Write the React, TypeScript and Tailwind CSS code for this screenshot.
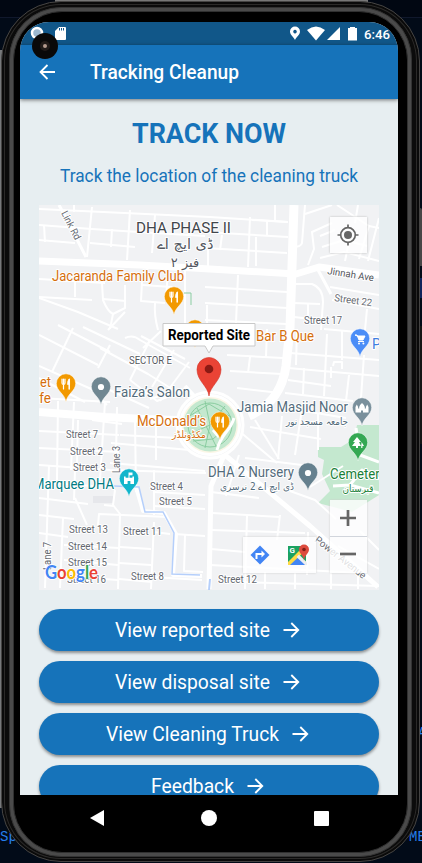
import React from "react";

const minorRoads = [
  "M39 209 L210 217 L288 222", "M39 225 L92 229 L138 232 L205 236", "M39 240 L75 243", "M44 225 L45 242",
  "M92 207 L87 257", "M90 243 L135 247", "M130 210 L127 260", "M112 229 L111 247", "M155 215 L152 253", "M74 205 L74 212",
  "M75 282 V297", "M39 279 L105 283", "M39 297 L92 300", "M39 298 L78 312 L118 329", "M102 283 L103 300 Q108 312 113 314 L125 308 V285",
  "M103 299 L126 301", "M113 314 L110 329", "M125 312 L108 330", "M142 282 L141 301 L165 303", "M142 285 L172 287", "M155 303 Q154 315 158 330", "M168 268 L166 300", "M185 270 V330",
  "M252 220 L288 222", "M205 232 L288 237", "M205 248 L287 253", "M205 287 L287 292", "M205 303 L287 308", "M250 217 L248 267", "M267 220 V235",
  "M275 205 V220", "M222 235 L220 250", "M208 248 V268", "M238 275 L236 323", "M256 237 V266", "M205 320 L287 324", "M207 305 V323",
  "M305 205 L302 243 Q301 247 293 247", "M305 214 L332 205", "M332 223 L312 232 L314 249 L308 265", "M337 205 L369 226 L379 228", "M320 236 L335 230", "M322 247 L344 240 L367 246", "M320 258 L344 252 L379 261",
  "M358 205 L355 223", "M369 226 L359 259", "M379 218 L368 261", "M351 232 L345 261", "M330 287 L379 295", "M332 300 L379 309", "M295 284 L312 284 Q323 288 323 302 L321 330", "M293 303 L320 304", "M308 303 V317", "M294 317 L320 320", "M324 329 L379 334", "M367 309 L365 330",
  "M39 335 L98 365", "M73 328 L52 372", "M83 327 L140 354", "M58 325 L110 352", "M39 366 L98 392", "M39 378 L85 402", "M92 382 L149 408", "M100 348 L148 374 L172 389", "M110 345 L98 368", "M125 338 Q133 334 140 340 L190 368", "M141 336 L185 359", "M161 331 L143 348", "M150 340 L130 380", "M174 350 L152 387", "M189 362 L160 401", "M150 399 L182 389", "M92 390 L107 405", "M130 380 L157 401 L185 390",
  "M39 398 L110 402", "M58 401 L57 480", "M74 402 L71 470", "M105 402 L100 480", "M117 407 L116 455", "M39 431 L119 435", "M39 448 L119 452", "M92 420 L122 424", "M78 420 L77 465", "M156 423 V460", "M135 421 L136 492", "M111 443 L190 450", "M110 463 L205 471", "M120 435 L178 438",
  "M227 355 L283 358", "M230 371 L282 374", "M237 388 L280 393", "M250 357 L248 373", "M267 329 L266 357", "M290 353 L379 360", "M288 368 L379 376", "M288 380 L331 386", "M285 393 L353 401", "M327 334 L324 396", "M364 355 L361 398", "M304 368 L303 394", "M331 367 V378 M333 366 L334 362 H342 V369", "M297 329 L296 365", "M342 331 V360", "M349 375 L346 401",
  "M250 427 L321 439", "M255 420 L279 459", "M239 431 L277 463", "M282 416 L278 459", "M302 409 L295 455", "M318 414 V450", "M286 408 L346 418", "M245 458 L310 466",
  "M39 465 L110 470 L206 473", "M39 482 L93 486", "M39 498 L88 504", "M49 465 L45 588", "M75 498 L87 525", "M75 470 L74 500", "M63 518 L60 588", "M39 515 L74 519", "M98 525 L99 514 L168 517", "M39 533 L68 537", "M64 545 L119 548", "M64 560 L118 565", "M64 576 L118 580", "M115 490 L113 505 L120 514 L118 589", "M104 505 L114 506", "M154 522 L151 589", "M120 547 L151 549", "M119 563 L151 565", "M119 579 L152 582", "M152 577 L202 580", "M154 532 L170 534", "M185 535 L184 571 L203 572", "M174 534 L205 536", "M154 492 L205 495", "M154 506 L205 509", "M154 470 L154 515",
  "M212 513 L280 517", "M211 530 L305 533", "M211 549 L245 552", "M247 515 L245 589", "M280 515 L277 540", "M308 532 L307 575", "M210 565 L360 573", "M238 582 L379 586", "M265 572 V589", "M295 573 V589", "M331 573 V589", "M211 492 L259 498", "M239 455 L226 496", "M262 486 L324 537", "M290 491 L315 500 L336 519", "M310 487 L343 466", "M360 531 L379 550", "M338 546 L379 569", "M358 573 V589",
];

const arteries = [
  ["M39 261 L140 265 L210 269 L296 274 L319 267 L379 275", 7],
  ["M294 205 L290 328 L286 366 Q281 402 249 416", 9],
  ["M39 412 L105 417 L145 419 L178 420", 8],
  ["M59 205 L66 218 L86 257", 3],
  ["M317 268 L331 294", 3],
  ["M224 455 L211 486 L209 589", 5],
  ["M225 455 L262 486 L310 526 L378 587", 5],
  ["M136 487 L143 511 L164 513 L176 534 L173 575 L202 576", 4],
  ["M185 386 L196 398", 4],
] as const;

type LabelProps = { x: number; y: number; w?: number; s?: number; c?: string; rot?: number; rtl?: boolean; children: string };
function Label({ x, y, w, s = 10, c = "#646870", rot, rtl, children }: LabelProps) {
  return (
    <text
      x={x} y={y} fontSize={s} fill={c} stroke="#ffffff" strokeWidth="2" strokeLinejoin="round" paintOrder="stroke"
      textLength={w} lengthAdjust="spacingAndGlyphs" textAnchor={rtl ? "middle" : "start"}
      className={rtl ? "font-['DejaVu_Sans',sans-serif]" : "font-['Roboto',sans-serif]"}
      transform={rot ? `rotate(${rot} ${x} ${y})` : undefined}
    >
      {children}
    </text>
  );
}

function Pin({ x, y, color, children }: { x: number; y: number; color: string; children?: React.ReactNode }) {
  return (
    <g transform={`translate(${x} ${y})`}>
      <path d="M0 18 C-1 10 -9.7 7 -9.7 -.5 A9.7 9.7 0 0 1 9.7 -.5 C9.7 7 1 10 0 18Z" fill={color} stroke="#fff" strokeWidth=".5" />
      {children}
    </g>
  );
}

const fork = (
  <g fill="none" stroke="#fff" strokeLinecap="round">
    <path d="M-4 -5 V-1 Q-4 .5 -2.5 .5 Q-1 .5 -1 -1 V-5 M-2.5 -5 V5" strokeWidth="1.2" />
    <path d="M3.2 -4.4 V5" strokeWidth="1.5" />
    <path d="M3.2 -5 Q.9 -3 1.4 .5 H3.2Z" fill="#fff" strokeWidth=".6" />
  </g>
);

function CityMap() {
  return (
    <svg viewBox="39 205 340 385" className="block h-[385px] w-[340px]">
      <rect x="39" y="205" width="340" height="385" fill="#f1f2f4" />
      <path d="M357 425 H379 V495 L352 512 L318 503 L330 491 L322 474 L324 460 L318 457 V447 H341 L354 439Z" fill="#c4e8cf" />
      <path d="M93 496 h20 v7 h-20z" fill="#e6e7eb" />
      <g fill="none" stroke="#fff" strokeWidth="2" strokeLinejoin="round">
        {minorRoads.map((d) => <path key={d} d={d} />)}
        {arteries.map(([d, w]) => <path key={d} d={d} strokeWidth={w} />)}
        <path d="M356 428 L360 455 L379 462 M350 485 L362 470 L379 479 M333 486 L350 485 L379 493" strokeWidth="3" />
      </g>
      <path d="M114 486 L139 487 L145 512 H163 L174 533 L172 574 L200 575" fill="none" stroke="#b5cffb" strokeWidth="1.5" />
      <path d="M184 293 h7 v12" fill="none" stroke="#8bcda2" />
      <path d="M209 590 l1 -11" stroke="#b5cffb" strokeWidth="2" />
      <circle cx="210" cy="425" r="33" fill="#f1f2f4" stroke="#fff" strokeWidth="3" />
      <circle cx="210" cy="425" r="29.5" fill="#fbf6e6" stroke="#fff" strokeWidth="3" />
      <circle cx="210" cy="425" r="26.5" fill="#c4e8cf" />
      <g fill="none" stroke="#83ca9b" strokeWidth=".9">
        <circle cx="210" cy="425" r="22" />
        <path d="M188 417 L209 404 L231 417 M197 408 L217 448 M190 434 L210 425 L225 406 M205 401 L210 425 L205 448 M234 421 L213 439 L193 441" />
      </g>
      <path d="M234 418 C230 432 221 433 217 450 M219 437 L213 430" fill="none" stroke="#fff" strokeWidth="3" />

      <Label x={61} y={213} w={31} rot={63}>Link Rd</Label>
      <Label x={136} y={233} w={95} s={15} c="#42464c">DHA PHASE II</Label>
      <Label x={185} y={249} w={57} s={14} c="#53575e" rtl>ڈی ایچ اے</Label>
      <Label x={185} y={267} s={13} c="#53575e" rtl>فیز ۲</Label>
      <Label x={327} y={274} w={47} rot={9} c="#55585e">Jinnah Ave</Label>
      <Label x={334} y={301} w={38} rot={8}>Street 22</Label>
      <Label x={304} y={324} w={38}>Street 17</Label>
      <Label x={52} y={281} w={132} s={14} c="#d56e0c">Jacaranda Family Club</Label>
      <Label x={129} y={364} w={43} s={10} c="#55585e">SECTOR E</Label>
      <Label x={114} y={397} w={76} s={14} c="#536b7b">Faiza’s Salon</Label>
      <Label x={40} y={387} w={11} s={14} c="#d56e0c">et</Label>
      <Label x={32} y={403} w={19} s={14} c="#d56e0c">afe</Label>
      <Label x={256} y={341} w={58} s={14} c="#d56e0c">Bar B Que</Label>
      <Label x={372} y={349} s={14} c="#3e7de0">P</Label>
      <Label x={237} y={412} w={111} s={14} c="#536b7b">Jamia Masjid Noor</Label>
      <Label x={317} y={425} w={62} s={10} c="#536b7b" rtl>جامعہ مسجد نور</Label>
      <Label x={137} y={426} w={69} s={14} c="#d56e0c">McDonald’s</Label>
      <Label x={189} y={438} w={34} s={10} c="#d56e0c" rtl>مکڈونلڈز</Label>
      <Label x={66} y={438} w={32}>Street 7</Label>
      <Label x={70} y={455} w={33}>Street 2</Label>
      <Label x={73} y={471} w={33}>Street 3</Label>
      <Label x={120} y={473} w={27} rot={-90}>Lane 3</Label>
      <Label x={208} y={477} w={86} s={14} c="#536b7b">DHA 2 Nursery</Label>
      <Label x={257} y={490} w={74} s={10} c="#536b7b" rtl>ڈی ایچ اے 2 نرسری</Label>
      <Label x={330} y={479} w={56} s={14} c="#188038">Cemetery</Label>
      <Label x={358} y={492} w={31} s={10} c="#188038" rtl>قبرستان</Label>
      <Label x={33} y={489} w={81} s={14} c="#007b83">Marquee DHA</Label>
      <Label x={150} y={490} w={33}>Street 4</Label>
      <Label x={159} y={505} w={33}>Street 5</Label>
      <Label x={69} y={533} w={39}>Street 13</Label>
      <Label x={123} y={535} w={39}>Street 11</Label>
      <Label x={68} y={550} w={39}>Street 14</Label>
      <Label x={68} y={566} w={39}>Street 15</Label>
      <Label x={67} y={583} w={39}>Street 16</Label>
      <Label x={131} y={580} w={33}>Street 8</Label>
      <Label x={218} y={583} w={39}>Street 12</Label>
      <Label x={51} y={570} w={28} rot={-90}>Lane 7</Label>
      <Label x={314} y={541} w={62} rot={38}>Power Avenue</Label>

      <Pin x={174} y={297} color="#f29900">{fork}</Pin>
      <Pin x={195} y={330} color="#f29900">{fork}</Pin>
      <Pin x={66} y={384} color="#f29900">{fork}</Pin>
      <Pin x={101} y={387} color="#708792"><circle r="3.1" fill="#fff" /></Pin>
      <Pin x={360} y={339} color="#4b8df7"><path d="M-5 -4 H-3 L-1 1 H3 L5 -3 H-2.7Z M-2 2.5 H4" fill="#fff" stroke="#fff" /><circle cx="-1" cy="4.5" r="1" fill="#fff" /><circle cx="3.4" cy="4.5" r="1" fill="#fff" /></Pin>
      <Pin x={362} y={408} color="#7a909c"><path d="M-6.5 4.5 V-1 l1.3 -2.4 1.3 2.4 V.5 H-2.8 V-1 Q-2.8 -2.6 0 -5 Q2.8 -2.6 2.8 -1 V.5 H3.9 V-1 l1.3 -2.4 1.3 2.4 V4.5 H1 V2.4 H-1 V4.5Z" fill="#fff" /></Pin>
      <Pin x={358} y={443} color="#34a853"><path d="M-1 -6 L-5 -1 H-3 L-6 3 H-2 V5 H0 V3 H3 L1 -1 H3Z M3.6 -1 L6 3 H4.4 V5 H3.2 V3Z" fill="#fff" /></Pin>
      <Pin x={308} y={473} color="#65808e"><circle r="3.1" fill="#fff" /></Pin>
      <Pin x={129} y={479} color="#12b5cb"><path d="M-5 5 V-2.5 H-3.4 V-1.2 H-.5 V-6.5 H3.5 V-3.8 H.5 V-1.2 H3.4 V-2.5 H5 V5 H1.4 V2 H-1.4 V5Z" fill="#fff" /></Pin>
      <Pin x={220} y={422} color="#f29900">{fork}</Pin>

      <path d="M209 396 C208 386 197 381 197 369.5 A12 12 0 0 1 221 369.5 C221 381 210 386 209 396Z" fill="#ea4335" stroke="#d33426" strokeWidth=".6" />
      <circle cx="209" cy="369" r="4.3" fill="#8b1a14" />
      <path d="M163 323.5 H255 V346 H213 L209 353 L205 346 H163Z" fill="#fff" stroke="#c9c9c9" />
      <text x="168" y="340" textLength="82" lengthAdjust="spacingAndGlyphs" className="fill-black font-['Roboto',sans-serif] text-[14px] font-bold">Reported Site</text>
      <text x="45" y="579" textLength="53" lengthAdjust="spacingAndGlyphs" stroke="#fff" strokeWidth="1.6" paintOrder="stroke" className="font-['Lato',sans-serif] text-[19px] font-bold">
        <tspan fill="#4285f4">G</tspan><tspan fill="#ea4335">o</tspan><tspan fill="#fbbc04">o</tspan><tspan fill="#4285f4">g</tspan><tspan fill="#34a853">l</tspan><tspan fill="#ea4335">e</tspan>
      </text>
    </svg>
  );
}

function MapControls() {
  return (
    <>
      <button className="absolute top-[12px] left-[291px] flex h-[36px] w-[37px] items-center justify-center bg-white/80 pr-px shadow-[0_0_2px_#bbb]">
        <svg width="24" height="24" viewBox="-12 -12 24 24" fill="none" stroke="#666" strokeWidth="1.7"><circle r="7.3" /><circle r="4" fill="#666" stroke="none" /><path d="M0 -10.5 V-7 M0 7 V10.5 M-10.5 0 H-7 M7 0 H10.5" /></svg>
      </button>
      <div className="absolute top-[332px] left-[204px] flex h-[36px] w-[73px] items-center bg-white/80 shadow-[0_0_2px_#ccc]">
        <button className="flex flex-1 justify-center">
          <svg width="20" height="20" viewBox="-10 -10 20 20"><path d="M0 -9.5 L9.5 0 L0 9.5 L-9.5 0Z" fill="#4285f4" strokeLinejoin="round" /><path d="M-3.5 4 V-1 H2" fill="none" stroke="#fff" strokeWidth="2" /><path d="M1.5 -4.5 L5 -1 L1.5 2.5Z" fill="#fff" /></svg>
        </button>
        <button className="flex flex-1 justify-center pl-1">
          <svg width="23" height="22" viewBox="0 0 23 22">
            <path d="M1 2 H19 V21 H1Z" fill="#1ba261" /><path d="M1 21 L11 11 L20 21Z" fill="#4285f4" /><path d="M1 21 V18 L16 3 L19 6 L3 21Z" fill="#ffda44" /><path d="M9.5 13 L12 10.5 L20 18.5 V21 H18Z" fill="#eee" />
            <text x="2.5" y="9" className="fill-white font-['Roboto',sans-serif] text-[8px] font-bold">G</text>
            <path d="M17 17 C17 11 12 10 12 5.5 A5 5 0 0 1 22 5.5 C22 10 17 11 17 17Z" fill="#dd4b3e" /><circle cx="17" cy="5.5" r="1.8" fill="#821f18" />
          </svg>
        </button>
      </div>
      <div className="absolute top-[295px] left-[291px] flex h-[73px] w-[37px] flex-col divide-y divide-gray-300 bg-white/80 shadow-[0_0_2px_#ccc]">
        <button className="flex flex-1 items-center justify-center pr-px"><svg width="16" height="16" viewBox="0 0 16 16"><path d="M0 8 H16 M8 0 V16" stroke="#666" strokeWidth="2.7" /></svg></button>
        <button className="flex flex-1 items-center justify-center pr-px pb-px"><svg width="16" height="16" viewBox="0 0 16 16"><path d="M0 8 H16" stroke="#666" strokeWidth="2.7" /></svg></button>
      </div>
    </>
  );
}

function Arrow() {
  return <svg width="17" height="18" viewBox="0 0 17 18" fill="none" stroke="currentColor" strokeWidth="1.8"><path d="M.5 9 H15 M8.3 2 L15.3 9 L8.3 16" /></svg>;
}

function ActionButton({ label, width }: { label: string; width: number }) {
  return (
    <button className="flex h-[42px] w-[340px] shrink-0 items-center justify-center gap-[13px] rounded-[21px] bg-[#1673ba] pr-[3px] text-[19.5px] leading-none text-white shadow-[0_2px_3px_#0006]">
      <svg width={width} height="28" className="overflow-visible fill-white"><text y="21" textLength={width} lengthAdjust="spacingAndGlyphs">{label}</text></svg>
      <Arrow />
    </button>
  );
}

function StatusBar() {
  return (
    <div className="h-[23px] shrink-0 bg-[#115789] text-white">
      <svg width="378" height="23" viewBox="20 22 378 23" fill="#fff">
        <circle cx="37" cy="33" r="5" fill="#9bb8cf" stroke="#fff" strokeWidth="2.5" />
        <path d="M59 27 H65 Q66 27 66 28 V39 Q66 40 65 40 H56 Q55 40 55 39 V31Z" /><path d="M59.5 28 V30.5 M61.5 28 V30.5 M63.5 28 V30.5" stroke="#115789" />
        <path fillRule="evenodd" d="M295 40 C294 37 290 35 290 31.5 A5 5 0 0 1 300 31.5 C300 35 296 37 295 40Z M295 29.8 a1.8 1.8 0 1 0 .01 0Z" />
        <path d="M307 30 Q316 23 325 30 L316 40.5Z" /><path d="M340 27 V40 H327Z" />
        <path d="M350 27 H355 V28 H357 V40.5 H348 V28 H350Z" />
        <text x="364" y="39" textLength="26" lengthAdjust="spacingAndGlyphs" className="text-[13.5px] font-medium">6:46</text>
      </svg>
    </div>
  );
}

export default function App() {
  return (
    <div className="relative h-[863px] w-[422px] overflow-hidden bg-[#020b18] font-['Roboto',sans-serif]">
      <div className="absolute top-0 left-0 h-[18px] w-full border-b border-[#10182c] bg-[#010712]" />
      <div className="absolute top-0 left-[55px] h-2 w-[313px] bg-[#777]" />
      <div className="absolute top-[50px] left-0 h-[758px] w-2 bg-[#77797b]" />
      <div className="absolute top-[278px] right-0 h-5 w-1 bg-[#10245b]" />
      <span className="absolute top-[827px] left-0 font-['Liberation_Mono',monospace] text-[14px] text-[#267fed]">Sp</span>
      <span className="absolute top-[827px] left-[409px] font-['Liberation_Mono',monospace] text-[14px] text-[#267fed]">ME</span>
      <span className="absolute top-[723px] left-[418px] font-['Liberation_Mono',monospace] text-[14px] text-[#267fed]">A</span>
      <div className="absolute top-[208px] left-[418px] h-[58px] w-1 rounded-t bg-[#474747]" />
      <div className="absolute top-[326px] left-[418px] h-[118px] w-1 bg-[#151515]" />

      <div className="absolute top-[1px] left-[1px] h-[861px] w-[419px] rounded-[60px] border border-[#454443] bg-[#0b0b0b] px-[7px] pt-[5px] pb-[4px] shadow-[inset_0_0_0_2px_#0a0a0a,inset_0_0_0_3px_#2b2a29]">
        <div className="h-full w-full rounded-[52px] border-[1px] border-[#333] bg-[#4a4a4a] p-[3px]">
          <div className="h-full w-full rounded-[49px] border border-[#303030] bg-black px-[6px] pt-[10px]">
            <div className="flex h-[773px] w-[378px] flex-col overflow-hidden rounded-t-[29px] bg-[#e7eef1]">
              <StatusBar />
              <header className="relative z-10 flex h-[54px] shrink-0 items-center bg-[#1673ba] pl-[19px] text-white shadow-[0_1px_4px_#0008]">
                <svg width="17" height="16" viewBox="0 0 17 16" fill="none" stroke="currentColor" strokeWidth="1.8"><path d="M16 8 H2 M8.5 1 L1.5 8 L8.5 15" /></svg>
                <svg width="151" height="30" className="ml-[33px] overflow-visible fill-white text-[20px] font-medium"><text x="1" y="22" textLength="149" lengthAdjust="spacingAndGlyphs">Tracking Cleanup</text></svg>
              </header>
              <main className="flex min-h-0 flex-1 flex-col items-center text-[#1673ba]">
                <h1 className="mt-[17px] h-9 shrink-0"><svg width="154" height="36" className="overflow-visible fill-current text-[27px] font-bold"><text y="27" textLength="154" lengthAdjust="spacingAndGlyphs">TRACK NOW</text></svg></h1>
                <p className="mt-[9px] h-7 shrink-0"><svg width="300" height="28" className="overflow-visible fill-current text-[18px]"><text x="1" y="21" textLength="298" lengthAdjust="spacingAndGlyphs">Track the location of the cleaning truck</text></svg></p>
                <section className="relative mt-[16px] h-[385px] w-[340px] shrink-0 overflow-hidden">
                  <CityMap />
                  <MapControls />
                </section>
                <div className="mt-[19px] flex flex-col gap-[10px]">
                  <ActionButton label="View reported site" width={155} />
                  <ActionButton label="View disposal site" width={155} />
                  <ActionButton label="View Cleaning Truck" width={173} />
                  <ActionButton label="Feedback" width={83} />
                </div>
              </main>
            </div>
            <nav className="flex h-[46px] w-[378px] items-center justify-between pr-[69px] pl-[70px]">
              <svg width="14" height="16" viewBox="0 0 14 16"><path d="M0 8 L14 0 V16Z" fill="#fff" /></svg>
              <div className="h-4 w-4 rounded-full bg-white" />
              <div className="h-[15px] w-[15px] rounded-[1px] bg-white" />
            </nav>
          </div>
        </div>
      </div>
      <div className="absolute top-[33px] left-[32px] z-20 flex h-[26px] w-[26px] items-center justify-center rounded-full bg-[#090909]">
        <div className="h-[10px] w-[10px] rounded-full bg-[#211b18] p-[3px]"><div className="h-1 w-1 rounded-full bg-[#b39a8d]" /></div>
      </div>
    </div>
  );
}
